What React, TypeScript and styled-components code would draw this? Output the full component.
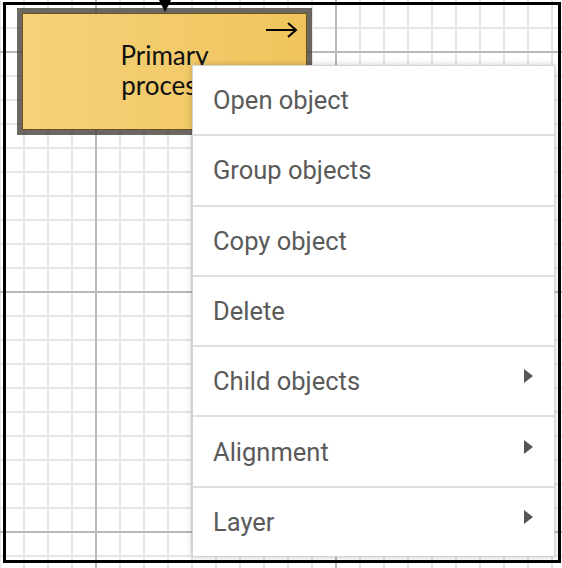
import React from 'react';
import styled, { createGlobalStyle } from 'styled-components';

const GlobalStyle = createGlobalStyle`
  html, body {
    margin: 0;
    padding: 0;
    background: #ffffff;
  }
  #root {
    width: 562px;
    height: 568px;
  }
`;

const Canvas = styled.div`
  position: relative;
  width: 562px;
  height: 568px;
  overflow: hidden;
  box-sizing: border-box;
  padding: 2px 1px 5px 3px;
  background-color: #ffffff;
  background-image:
    linear-gradient(to right, #b8b8b8 2px, transparent 2px),
    linear-gradient(to bottom, #b8b8b8 2px, transparent 2px),
    linear-gradient(to right, #e6e6e6 2px, transparent 2px),
    linear-gradient(to bottom, #e6e6e6 2px, transparent 2px);
  background-size: 240px 240px, 240px 240px, 24px 24px, 24px 24px;
  background-position: 95px 51px, 95px 51px, 23px 3px, 23px 3px;
`;

const Frame = styled.div`
  position: relative;
  width: 100%;
  height: 100%;
  box-sizing: border-box;
  border: 3px solid #000000;
`;

const Node = styled.div`
  position: absolute;
  left: 11px;
  top: 3px;
  width: 295px;
  height: 127px;
  box-sizing: border-box;
  border: 5px solid rgba(70, 66, 58, 0.8);
  display: flex;
`;

const NodeBody = styled.div`
  position: relative;
  flex: 1;
  padding-bottom: 4px;
  border: 1px solid #6e5220;
  background: linear-gradient(to right, #f6d27a, #efc45c);
  display: flex;
  align-items: center;
  justify-content: center;
  text-align: center;
  font-family: Lato, 'Open Sans', sans-serif;
  font-size: 26px;
  line-height: 30px;
  color: #111111;
`;

const Port = styled.div`
  position: absolute;
  left: 50%;
  top: -14px;
  margin-left: -6px;
  width: 0;
  height: 0;
  border-left: 6px solid transparent;
  border-right: 6px solid transparent;
  border-top: 12px solid #000000;
`;

const LinkArrow = styled.svg`
  position: absolute;
  right: 7px;
  top: 8px;
`;

const Menu = styled.ul`
  position: absolute;
  left: 186px;
  top: 60px;
  width: 361px;
  margin: 0;
  padding: 0;
  list-style: none;
  background: #ffffff;
  border: 1px solid #d4d4d4;
  box-shadow: 0 0 6px rgba(0, 0, 0, 0.22);
  font-family: Roboto, 'Liberation Sans', sans-serif;
`;

const MenuItem = styled.li`
  height: 68.3px;
  display: flex;
  align-items: center;
  justify-content: space-between;
  padding: 0 21px 0 20px;
  font-size: 25.5px;
  color: #5a5a5a;
  border-bottom: 2px solid #dedede;

  &:last-child {
    border-bottom: none;
  }
`;

const SubArrow = styled.span`
  width: 0;
  height: 0;
  margin-bottom: 10px;
  border-top: 7px solid transparent;
  border-bottom: 7px solid transparent;
  border-left: 9px solid #555555;
`;

const items: { label: string; sub?: boolean }[] = [
  { label: 'Open object' },
  { label: 'Group objects' },
  { label: 'Copy object' },
  { label: 'Delete' },
  { label: 'Child objects', sub: true },
  { label: 'Alignment', sub: true },
  { label: 'Layer', sub: true },
];

export default function App() {
  return (
    <>
      <GlobalStyle />
      <Canvas>
        <Frame>
          <Node>
            <NodeBody>
              <Port />
              <LinkArrow width="34" height="16" viewBox="0 0 34 16">
                <path d="M1 8 H31 M23 1 L31 8 L23 15" fill="none" stroke="#000" strokeWidth="2" />
              </LinkArrow>
              <span>
                Primary
                <br />
                process
              </span>
            </NodeBody>
          </Node>
          <Menu>
            {items.map((item) => (
              <MenuItem key={item.label}>
                <span>{item.label}</span>
                {item.sub && <SubArrow />}
              </MenuItem>
            ))}
          </Menu>
        </Frame>
      </Canvas>
    </>
  );
}
